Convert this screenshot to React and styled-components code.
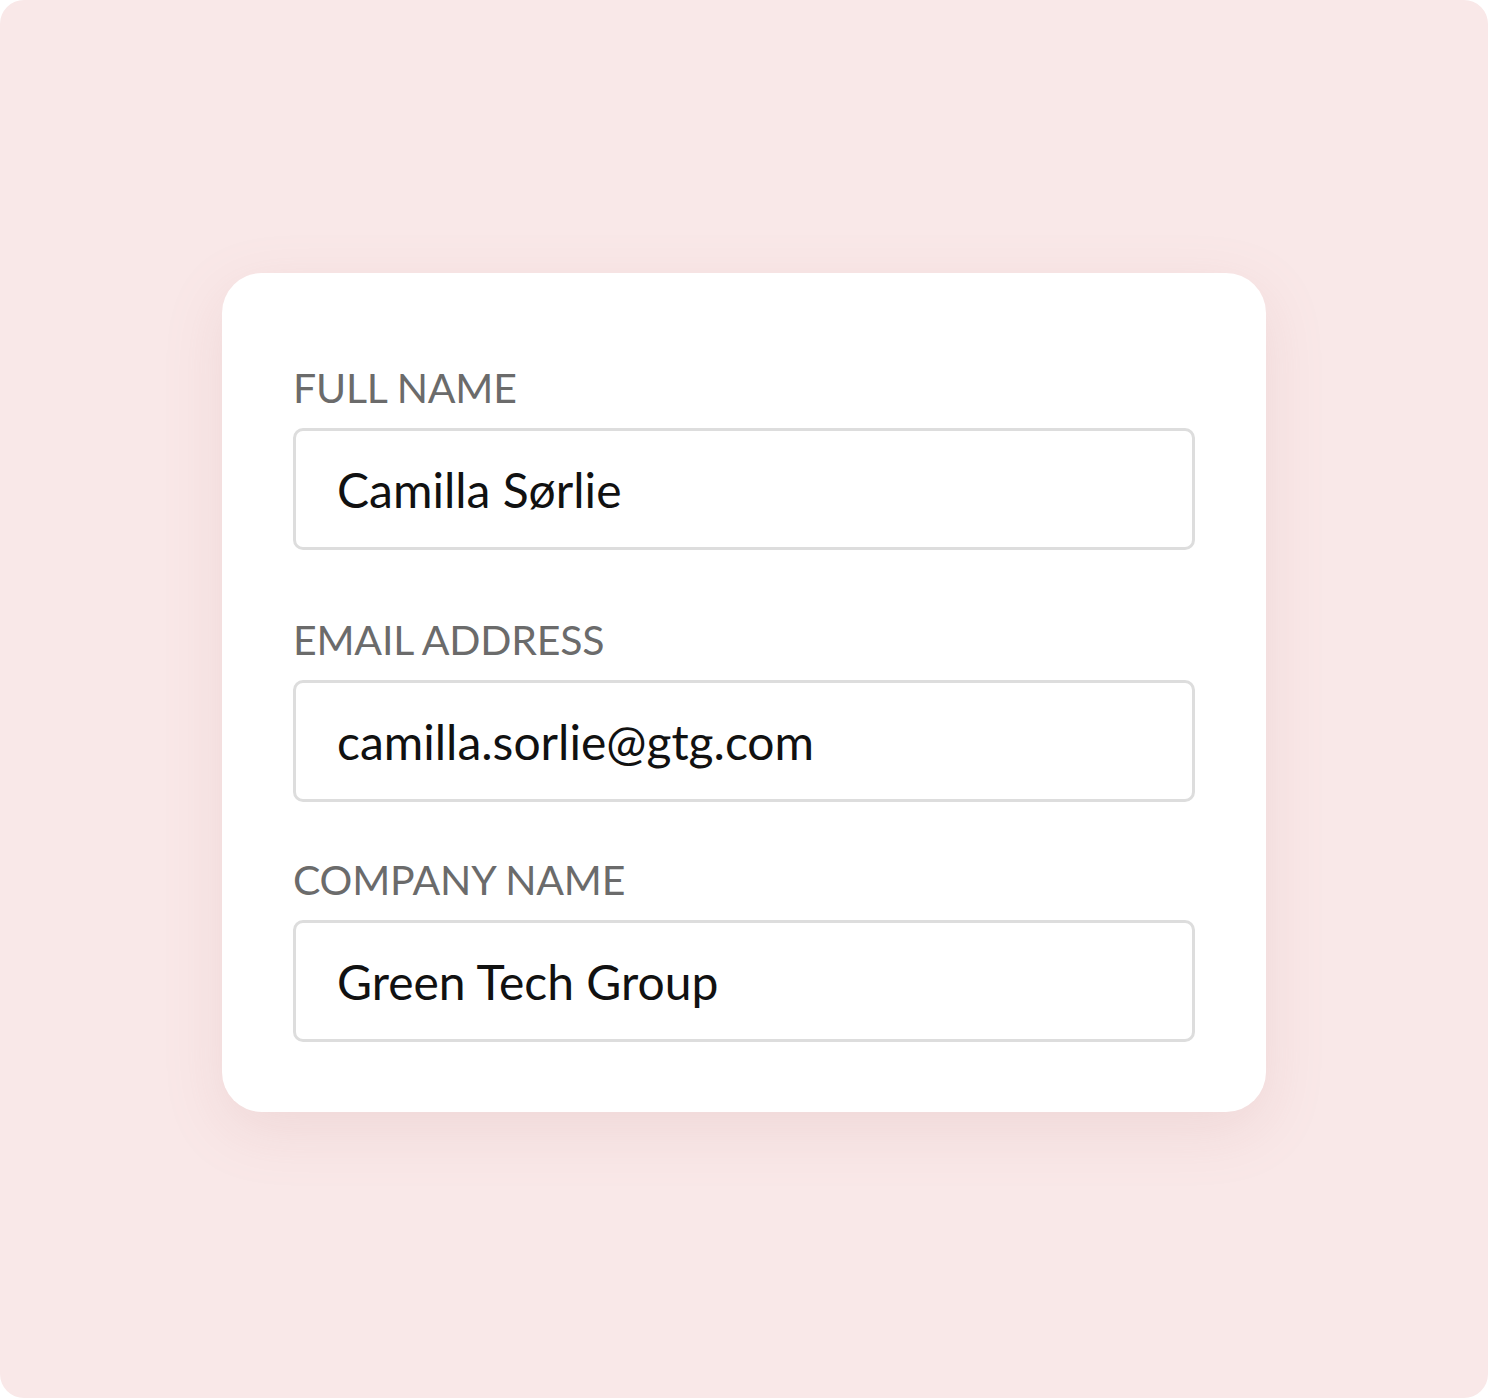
import styled, { createGlobalStyle } from 'styled-components';

const GlobalStyle = createGlobalStyle`
  html, body { margin: 0; padding: 0; background: #ffffff; }
  * { box-sizing: border-box; }
`;

/* ── Styled Components ── */
const Backdrop = styled.div`
  width: 1488px;
  height: 1398px;
  background: #f9e8e8;
  border-radius: 24px;
  display: flex;
  align-items: center;
  justify-content: center;
  padding-bottom: 13px;
  font-family: Lato, 'Noto Sans', sans-serif;
`;

const Card = styled.form`
  width: 1044px;
  background: #ffffff;
  border-radius: 40px;
  padding: 94px 71px 70px;
  box-shadow: 0 18px 60px rgba(190, 130, 130, 0.16);
  display: flex;
  flex-direction: column;
`;

const Field = styled.label`
  display: flex;
  flex-direction: column;
  gap: 20px;
  margin-bottom: ${({ $gap }) => $gap}px;
  &:last-child { margin-bottom: 0; }
`;

const Label = styled.span`
  font-size: 41px;
  line-height: 41px;
  color: #6b6b6b;
  text-transform: uppercase;
  letter-spacing: -0.2px;
`;

const Input = styled.input`
  height: 122px;
  width: 100%;
  border: 3px solid #dddddd;
  border-radius: 10px;
  padding: 0 0 0 41px;
  font-family: inherit;
  font-size: 48px;
  color: #111111;
  background: #fff;
  outline: none;
`;

const fields = [
  { label: 'Full name', value: 'Camilla Sørlie', gap: 69 },
  { label: 'Email address', value: 'camilla.sorlie@gtg.com', gap: 57 },
  { label: 'Company name', value: 'Green Tech Group', gap: 0 },
];

/* ── Component ── */
export default function App() {
  return (
    <>
      <GlobalStyle />
      <Backdrop>
        <Card onSubmit={e => e.preventDefault()}>
          {fields.map(({ label, value, gap }) => (
            <Field key={label} $gap={gap}>
              <Label>{label}</Label>
              <Input defaultValue={value} readOnly />
            </Field>
          ))}
        </Card>
      </Backdrop>
    </>
  );
}
